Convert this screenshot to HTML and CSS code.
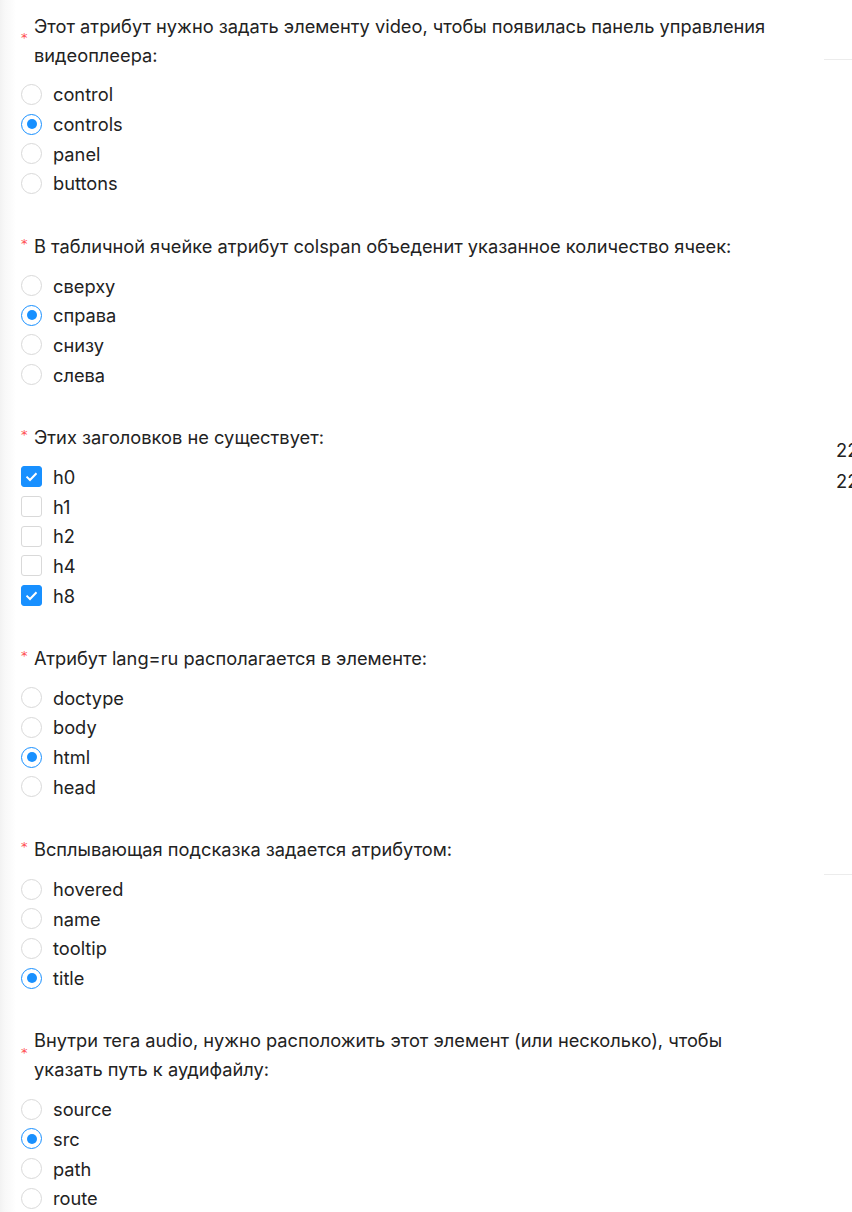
FILE: index.html
```html
<!DOCTYPE html>
<html lang="ru">
<head>
<meta charset="utf-8">
<title>Тест</title>
<link rel="stylesheet" href="styles.css">
</head>
<body>
<div class="page">
  <main class="form">
    <section class="item">
      <div class="label"><span class="req">*</span><span class="text">Этот атрибут нужно задать элементу video, чтобы появилась панель управления видеоплеера:</span></div>
      <div class="options">
        <div class="opt"><span class="radio"></span><span class="otext">control</span></div>
        <div class="opt"><span class="radio on"></span><span class="otext">controls</span></div>
        <div class="opt"><span class="radio"></span><span class="otext">panel</span></div>
        <div class="opt"><span class="radio"></span><span class="otext">buttons</span></div>
      </div>
    </section>
    <section class="item">
      <div class="label"><span class="req">*</span><span class="text">В табличной ячейке атрибут colspan объеденит указанное количество ячеек:</span></div>
      <div class="options">
        <div class="opt"><span class="radio"></span><span class="otext">сверху</span></div>
        <div class="opt"><span class="radio on"></span><span class="otext">справа</span></div>
        <div class="opt"><span class="radio"></span><span class="otext">снизу</span></div>
        <div class="opt"><span class="radio"></span><span class="otext">слева</span></div>
      </div>
    </section>
    <section class="item">
      <div class="label"><span class="req">*</span><span class="text">Этих заголовков не существует:</span></div>
      <div class="options">
        <div class="opt"><span class="check on"><svg viewBox="0 0 21 21" width="21" height="21"><path d="M5.5 10.6 L9 14 L15.5 7.2" fill="none" stroke="#fff" stroke-width="2"/></svg></span><span class="otext">h0</span></div>
        <div class="opt"><span class="check"></span><span class="otext">h1</span></div>
        <div class="opt"><span class="check"></span><span class="otext">h2</span></div>
        <div class="opt"><span class="check"></span><span class="otext">h4</span></div>
        <div class="opt"><span class="check on"><svg viewBox="0 0 21 21" width="21" height="21"><path d="M5.5 10.6 L9 14 L15.5 7.2" fill="none" stroke="#fff" stroke-width="2"/></svg></span><span class="otext">h8</span></div>
      </div>
    </section>
    <section class="item">
      <div class="label"><span class="req">*</span><span class="text">Атрибут lang=ru располагается в элементе:</span></div>
      <div class="options">
        <div class="opt"><span class="radio"></span><span class="otext">doctype</span></div>
        <div class="opt"><span class="radio"></span><span class="otext">body</span></div>
        <div class="opt"><span class="radio on"></span><span class="otext">html</span></div>
        <div class="opt"><span class="radio"></span><span class="otext">head</span></div>
      </div>
    </section>
    <section class="item">
      <div class="label"><span class="req">*</span><span class="text">Всплывающая подсказка задается атрибутом:</span></div>
      <div class="options">
        <div class="opt"><span class="radio"></span><span class="otext">hovered</span></div>
        <div class="opt"><span class="radio"></span><span class="otext">name</span></div>
        <div class="opt"><span class="radio"></span><span class="otext">tooltip</span></div>
        <div class="opt"><span class="radio on"></span><span class="otext">title</span></div>
      </div>
    </section>
    <section class="item">
      <div class="label"><span class="req">*</span><span class="text">Внутри тега audio, нужно расположить этот элемент (или несколько), чтобы указать путь к аудифайлу:</span></div>
      <div class="options">
        <div class="opt"><span class="radio"></span><span class="otext">source</span></div>
        <div class="opt"><span class="radio on"></span><span class="otext">src</span></div>
        <div class="opt"><span class="radio"></span><span class="otext">path</span></div>
        <div class="opt"><span class="radio"></span><span class="otext">route</span></div>
      </div>
    </section>
  </main>
  <aside class="side">
    <div class="divider"></div>
    <div class="stats">
      <div class="stat">22</div>
      <div class="stat">22</div>
    </div>
    <div class="divider second"></div>
  </aside>
</div>
</body>
</html>
```
FILE: styles.css
```css
html, body {
  margin: 0;
  padding: 0;
  background: #fff;
}
body {
  font-family: Inter, "Liberation Sans", Arial, sans-serif;
  font-size: 18.25px;
  color: #222;
  height: 1212px;
  overflow: hidden;
}
.page {
  display: flex;
  min-height: 1212px;
  background: linear-gradient(to right, #f2f2f2 0, #f8f8f8 5px, #fcfcfc 12px, #fff 16px);
}
.form {
  width: 780px;
  flex: none;
  padding: 11.5px 0 0 21px;
  box-sizing: border-box;
}
.item {
  margin-bottom: 33.5px;
}
.label {
  display: flex;
  align-items: center;
  line-height: 29px;
  margin-bottom: 10px;
}
.req {
  color: #ff4d4f;
  font-family: "DejaVu Sans", sans-serif;
  font-size: 13px;
  width: 13px;
  flex: none;
  line-height: 29px;
  position: relative;
  top: -3px;
}
.text {
  flex: 1;
}
.options {
  display: flex;
  flex-direction: column;
}
.opt {
  display: flex;
  align-items: center;
  height: 29.7px;
}
.otext {
  margin-left: 11px;
}
.radio {
  width: 21px;
  height: 21px;
  box-sizing: border-box;
  border: 1px solid #d9d9d9;
  border-radius: 50%;
  background: #fff;
  flex: none;
  display: flex;
  align-items: center;
  justify-content: center;
}
.radio.on {
  border-color: #1890ff;
}
.radio.on::after {
  content: "";
  width: 10px;
  height: 10px;
  border-radius: 50%;
  background: #1890ff;
}
.check {
  width: 21px;
  height: 21px;
  box-sizing: border-box;
  border: 1px solid #d9d9d9;
  border-radius: 3px;
  background: #fff;
  flex: none;
  display: block;
  overflow: hidden;
}
.check.on {
  background: #1890ff;
  border-color: #1890ff;
}
.check svg {
  display: block;
  margin: -1px;
}
.side {
  flex: 1;
  padding: 59px 0 0 44px;
  overflow: hidden;
  min-width: 0;
}
.divider {
  height: 1px;
  background: #ececec;
}
.stats {
  margin-top: 374.5px;
  padding-left: 12px;
  line-height: 31px;
  white-space: nowrap;
}
.divider.second {
  margin-top: 377.5px;
}
```
